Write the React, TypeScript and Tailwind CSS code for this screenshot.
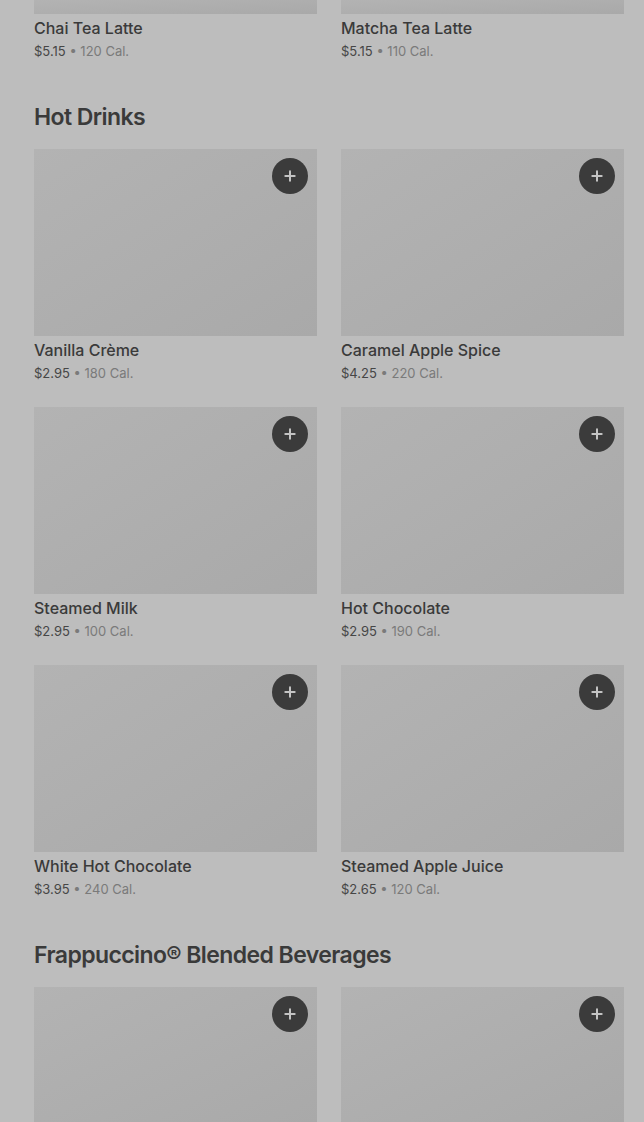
import { Plus } from "lucide-react";

type Item = { name: string; price: string; cal: string };
type Crop = "top" | "bottom" | undefined;

const sections: { title: string | null; items: Item[]; crop?: Crop }[] = [
  {
    title: null,
    crop: "top",
    items: [
      { name: "Chai Tea Latte", price: "$5.15", cal: "120 Cal." },
      { name: "Matcha Tea Latte", price: "$5.15", cal: "110 Cal." },
    ],
  },
  {
    title: "Hot Drinks",
    items: [
      { name: "Vanilla Crème", price: "$2.95", cal: "180 Cal." },
      { name: "Caramel Apple Spice", price: "$4.25", cal: "220 Cal." },
      { name: "Steamed Milk", price: "$2.95", cal: "100 Cal." },
      { name: "Hot Chocolate", price: "$2.95", cal: "190 Cal." },
      { name: "White Hot Chocolate", price: "$3.95", cal: "240 Cal." },
      { name: "Steamed Apple Juice", price: "$2.65", cal: "120 Cal." },
    ],
  },
  {
    title: "Frappuccino® Blended Beverages",
    crop: "bottom",
    items: [
      { name: "Mocha Cookie Crumble", price: "$5.75", cal: "480 Cal." },
      { name: "Caramel Ribbon Crunch", price: "$5.75", cal: "470 Cal." },
    ],
  },
];

function Card({ item, crop }: { item: Item; crop?: Crop }) {
  return (
    <div className="flex flex-col">
      <div
        className={`relative bg-gradient-to-br from-[#b3b3b3] to-[#a9a9a9] ${
          crop === "top" ? "h-[14px]" : crop === "bottom" ? "h-[135px]" : "h-[187px]"
        }`}
      >
        {crop !== "top" && (
          <button className="absolute top-[9px] right-[9px] w-9 h-9 rounded-full bg-[#3b3b3b] flex items-center justify-center text-[#c4c4c4]">
            <Plus size={16} strokeWidth={3} />
          </button>
        )}
      </div>
      {crop !== "bottom" && (
        <>
          <div className="mt-1 text-[16px] leading-5 font-medium text-[#3a3a3a]">
            {item.name}
          </div>
          <div className="mt-1 text-[13px] leading-[18px]">
            <span className="text-[#464646]">{item.price}</span>
            <span className="text-[#7a7a7a]"> • {item.cal}</span>
          </div>
        </>
      )}
    </div>
  );
}

export default function App() {
  return (
    <div
      className="h-[1122px] bg-[#bdbdbd] pl-[34px] pr-[20px] overflow-hidden"
      style={{ fontFamily: "Inter, 'Noto Sans', sans-serif" }}
    >
      {sections.map((s, i) => (
        <section key={i} className={s.title ? "mt-[41px]" : ""}>
          {s.title && (
            <h2 className="mb-4 text-[23px] leading-8 font-semibold tracking-tight text-[#3a3a3a]">
              {s.title}
            </h2>
          )}
          <div className="grid grid-cols-2 gap-x-6 gap-y-[25px]">
            {s.items.map((it) => (
              <Card key={it.name} item={it} crop={s.crop} />
            ))}
          </div>
        </section>
      ))}
    </div>
  );
}
